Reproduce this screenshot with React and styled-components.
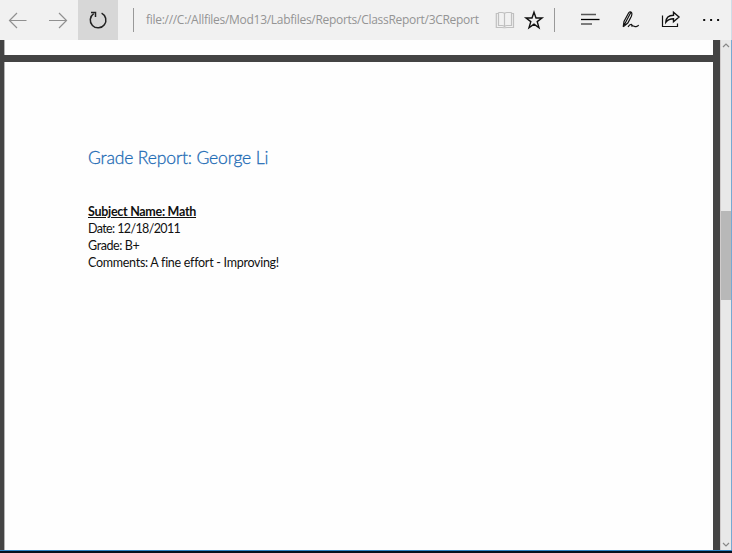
import React from "react";
import styled, { createGlobalStyle } from "styled-components";

const Global = createGlobalStyle`
  * { box-sizing: border-box; }
  body { margin: 0; overflow: hidden; background: #f1f1f1; }
`;

const Window = styled.div`
  display: grid;
  grid-template-rows: 40px 510px 3px;
  width: 732px;
  height: 553px;
`;

const Toolbar = styled.header`
  display: flex;
  align-items: center;
  background: #f1f1f1;
  border-right: 1px solid #cfdce8;
`;

const ToolButton = styled.button`
  display: block;
  flex: none;
  width: ${(p) => p.$width}px;
  height: 40px;
  padding: 0;
  border: 0;
  background: ${(p) => (p.$active ? "#d7d7d7" : "transparent")};
  color: ${(p) => p.$color || "#111"};
`;

const Glyph = styled.svg`
  display: block;
  fill: none;
  stroke: currentColor;
  stroke-width: ${(p) => p.$weight || 1.2};
`;

const Divider = styled.span`
  flex: none;
  width: 1px;
  height: 24px;
  margin-left: ${(p) => p.$before}px;
  margin-right: ${(p) => p.$after}px;
  background: #999;
`;

const Address = styled.div`
  flex: none;
  width: 339px;
  font: 12px/20px "Open Sans", sans-serif;
  letter-spacing: -0.29px;
  color: #949494;
  white-space: nowrap;
`;

const Viewer = styled.main`
  display: grid;
  grid-template-columns: 709px 12px;
  column-gap: 7px;
  padding-left: 4px;
  background: #444;
`;

const Pages = styled.div`
  display: grid;
  grid-template-rows: 15px 488px;
  row-gap: 7px;
`;

const Page = styled.article`
  background: #fefefe;
  padding: ${(p) => (p.$previous ? 0 : "84px 0 0 83px")};
  border-left: 1px solid #b5b5b5;
`;

const Title = styled.h1`
  margin: 0;
  height: 57px;
  font: 300 17.5px/24px "Lato", "Open Sans", sans-serif;
  letter-spacing: ${(p) => p.$spacing}px;
  color: #1f6cb5;
  -webkit-text-stroke: 0.3px #1f6cb5;
  white-space: nowrap;
`;

const Line = styled.p`
  margin: 0;
  height: 17px;
  font: ${(p) => (p.$strong ? 700 : 400)} 12.5px/17px "Lato", "Open Sans", sans-serif;
  letter-spacing: ${(p) => p.$spacing || 0}px;
  text-decoration: ${(p) => (p.$strong ? "underline" : "none")};
  text-underline-offset: 1px;
  color: #111;
  white-space: nowrap;
`;

const Scrollbar = styled.aside`
  display: grid;
  grid-template-rows: 171px 89px 1fr;
  background: #e8e8e8;
  border-right: 1px solid #76a9d3;
  border-left: 1px solid #d0cccc;
`;

const Track = styled.div`
  display: flex;
  align-items: ${(p) => (p.$end ? "flex-end" : "flex-start")};
`;

const Thumb = styled.div`
  background: #b8b8b8;
`;

const BottomEdge = styled.footer`
  background: #06101f;
  border-top: 1px solid #2e83c5;
`;

export default function App() {
  return (
    <>
      <Global />
      <Window>
        <Toolbar>
          <ToolButton $width={38} $color="#909090" aria-label="Back">
            <Glyph width="38" height="40"><path d="M26.5 20.5H9.5M17 13L9.5 20.5L17 28" /></Glyph>
          </ToolButton>
          <ToolButton $width={40} $color="#909090" aria-label="Forward">
            <Glyph width="40" height="40"><path d="M11 20.5H28.5M21 13L28.5 20.5L21 28" /></Glyph>
          </ToolButton>
          <ToolButton $width={40} $active $color="#222" aria-label="Refresh">
            <Glyph width="40" height="40" $weight={1.5}>
              <path d="M15.7 13.6A7.8 7.8 0 1 0 23.6 13.1" />
              <path d="M13 12.5H17.5V17" />
            </Glyph>
          </ToolButton>
          <Divider $before={15} $after={12} />
          <Address>file:///C:/Allfiles/Mod13/Labfiles/Reports/ClassReport/3CReport</Address>
          <ToolButton $width={35} $color="#c0c0c0" aria-label="Reading view">
            <Glyph width="35" height="40">
              <path d="M13.5 13.5H11.3V27.5H17Q19.5 27.5 19.5 28.3Q19.5 27.5 22 27.5H28.5V13.5H26.5" />
              <path d="M13.5 12.5V25.5H17Q19.5 25.5 19.5 27V14Q19.5 12.5 17 12.5H13.5M26.5 12.5V25.5H22Q19.5 25.5 19.5 27M19.5 14Q19.5 12.5 22 12.5H26.5" />
            </Glyph>
          </ToolButton>
          <ToolButton $width={30} aria-label="Favorite">
            <Glyph width="30" height="40" $weight={1.4}>
              <path d="M14 12.2L16 18H22L17.2 21.6L19 27.8L14 24.1L9 27.8L10.8 21.6L6 18H12Z" />
            </Glyph>
          </ToolButton>
          <Divider $before={4} $after={16} />
          <ToolButton $width={40} aria-label="Hub">
            <Glyph width="40" height="40">
              <path d="M10 14.5H25M10 24H21" stroke="#555" strokeWidth="1.7" />
              <path d="M10 19.5H28.5" strokeWidth="1.3" stroke="#000" />
            </Glyph>
          </ToolButton>
          <ToolButton $width={40} aria-label="Web note">
            <Glyph width="40" height="40">
              <path d="M12.2 26.8L13 21.5L17.7 12.8Q19.3 10.8 20.6 12.6Q21.4 13.8 20.4 16.2L16.8 23L12.2 26.8M19.8 12.5L13.2 25" />
              <path d="M17 26.8C19.8 22.8 22 24.4 20.4 26.3C22.3 24.8 23.3 27 25.2 26.6Q27 26.2 27.7 25" />
            </Glyph>
          </ToolButton>
          <ToolButton $width={40} aria-label="Share">
            <Glyph width="40" height="40">
              <path d="M11.5 15.5V26.5H26.5V23.5" />
              <path d="M14.8 22.3C15 17.5 18 15.2 22.5 15.2V12.2L28 17L22.5 21.8V18.8C19 18.8 17 19.5 14.8 22.3Z" strokeWidth="1.4" />
            </Glyph>
          </ToolButton>
          <ToolButton $width={40} aria-label="More actions">
            <Glyph width="40" height="40">
              <path d="M12.2 20H14.2M19.1 20H21.1M26.1 20H28.1" strokeWidth="2" />
            </Glyph>
          </ToolButton>
        </Toolbar>
        <Viewer>
          <Pages>
            <Page $previous />
            <Page>
              <Title $spacing={-0.14}>Grade Report: George Li</Title>
              <Line $strong $spacing={-0.29}>Subject Name: Math</Line>
              <Line $spacing={-0.62}>Date: 12/18/2011</Line>
              <Line $spacing={-0.4}>Grade: B+</Line>
              <Line $spacing={-0.28}>Comments: A fine effort - Improving!</Line>
            </Page>
          </Pages>
          <Scrollbar>
            <Track>
              <Glyph width="10" height="10"><path d="M2 7L5 4L8 7" stroke="#888" /></Glyph>
            </Track>
            <Thumb />
            <Track $end>
              <Glyph width="10" height="10"><path d="M2 3L5 6L8 3" stroke="#888" /></Glyph>
            </Track>
          </Scrollbar>
        </Viewer>
        <BottomEdge />
      </Window>
    </>
  );
}
